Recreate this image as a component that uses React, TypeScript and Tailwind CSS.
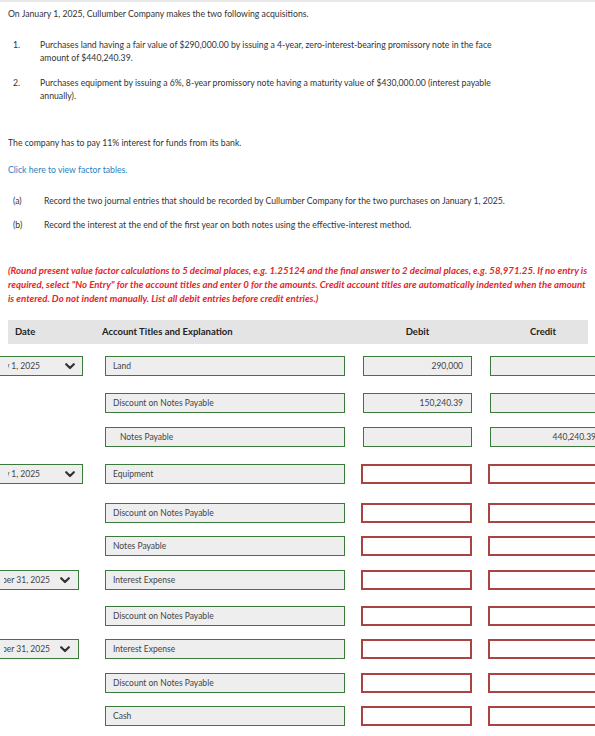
import React from "react";

// Journal entry rows
interface Row {
    account: string;
    indent?: boolean;
    debit?: string;
    credit?: string;
    mt: string;
}
interface Entry {
    date: string;
    dec: boolean;
    filled: boolean;
    rows: Row[];
}

const entries: Entry[] = [
    {
        date: "January 1, 2025",
        dec: false,
        filled: true,
        rows: [
            { account: "Land", debit: "290,000", mt: "mt-[13px]" },
            { account: "Discount on Notes Payable", debit: "150,240.39", mt: "mt-[17px]" },
            { account: "Notes Payable", indent: true, credit: "440,240.39", mt: "mt-[14px]" },
        ],
    },
    {
        date: "January 1, 2025",
        dec: false,
        filled: false,
        rows: [
            { account: "Equipment", mt: "mt-[17px]" },
            { account: "Discount on Notes Payable", mt: "mt-[19px]" },
            { account: "Notes Payable", mt: "mt-[13px]" },
        ],
    },
    {
        date: "December 31, 2025",
        dec: true,
        filled: false,
        rows: [
            { account: "Interest Expense", mt: "mt-[14px]" },
            { account: "Discount on Notes Payable", mt: "mt-[16px]" },
        ],
    },
    {
        date: "December 31, 2025",
        dec: true,
        filled: false,
        rows: [
            { account: "Interest Expense", mt: "mt-[13px]" },
            { account: "Discount on Notes Payable", mt: "mt-[14px]" },
            { account: "Cash", mt: "mt-[13px]" },
        ],
    },
];

const Chevron: React.FC = () => (
    <svg width="10" height="7" viewBox="0 0 10 7" className="shrink-0">
        <polyline points="1.2,1.2 5,5 8.8,1.2" fill="none" stroke="#333" strokeWidth="2.2" strokeLinecap="round" strokeLinejoin="round" />
    </svg>
);

const DateSelect: React.FC<{ date: string; dec: boolean }> = ({ date, dec }) => (
    <div className={`${dec ? "w-[79px]" : "w-[83px]"} h-[20px] shrink-0 flex items-center border-y border-r border-[#3c7a3c] bg-[#eeeeee] overflow-hidden`}>
        <div className={`${dec ? "ml-[4px] w-[46px]" : "ml-[8px] w-[32px]"} flex justify-end overflow-hidden shrink-0`}>
            <span className="shrink-0 whitespace-nowrap text-[8.5px] text-[#444]">{date}</span>
        </div>
        <div className="flex-1" />
        <Chevron />
        <div className={dec ? "w-[8px]" : "w-[7px]"} />
    </div>
);

const AmountBox: React.FC<{ value?: string; filled: boolean; credit?: boolean }> = ({ value, filled, credit }) => {
    if (!filled) {
        return (
            <div className={`h-[20px] shrink-0 border-2 border-[#a94442] bg-white ml-[16px] ${credit ? "w-[115px]" : "w-[111px]"}`} />
        );
    }
    return (
        <div
            className={`h-[20px] shrink-0 border border-[#3c7a3c] bg-[#eeeeee] flex items-center justify-end pr-[8px] text-[8.5px] text-[#444] whitespace-nowrap ml-[18px] ${credit ? "w-[115px]" : "w-[109px]"}`}
        >
            {value}
        </div>
    );
};

export default function App() {
    return (
        <div className="w-[595px] h-[736px] overflow-hidden bg-white border-t-2 border-[#e8e8e8] font-['Lato','Open_Sans',sans-serif] text-[#333]">
            <div className="pl-[8px] pt-[5px] text-[8.7px] leading-[13px]">
                <p>On January 1, 2025, Cullumber Company makes the two following acquisitions.</p>

                <div className="mt-[18px] pl-[5px] flex">
                    <span className="w-[27px] shrink-0">1.</span>
                    <p className="w-[470px]">
                        Purchases land having a fair value of $290,000.00 by issuing a 4-year, zero-interest-bearing promissory note in the face amount of $440,240.39.
                    </p>
                </div>
                <div className="mt-[12px] pl-[5px] flex">
                    <span className="w-[27px] shrink-0">2.</span>
                    <p className="w-[470px]">
                        Purchases equipment by issuing a 6%, 8-year promissory note having a maturity value of $430,000.00 (interest payable annually).
                    </p>
                </div>

                <p className="mt-[34px]">The company has to pay 11% interest for funds from its bank.</p>
                <p className="mt-[14px] text-[#2a7fc0]">Click here to view factor tables.</p>

                <div className="mt-[18px] pl-[5px] flex">
                    <span className="w-[31px] shrink-0">(a)</span>
                    <p>Record the two journal entries that should be recorded by Cullumber Company for the two purchases on January 1, 2025.</p>
                </div>
                <div className="mt-[11px] pl-[5px] flex">
                    <span className="w-[31px] shrink-0">(b)</span>
                    <p>Record the interest at the end of the first year on both notes using the effective-interest method.</p>
                </div>

                <p className="mt-[32px] pr-[3px] text-[9.65px] leading-[14px] font-bold italic text-[#e3262b]">
                    (Round present value factor calculations to 5 decimal places, e.g. 1.25124 and the final answer to 2 decimal places, e.g. 58,971.25. If no entry is required, select "No Entry" for the account titles and enter 0 for the amounts. Credit account titles are automatically indented when the amount is entered. Do not indent manually. List all debit entries before credit entries.)
                </p>
            </div>

            {/* Table header */}
            <div className="mt-[15px] ml-[8px] w-[580px] h-[24px] bg-[#e4e4e4] flex items-center text-[9.5px] font-bold text-[#222]">
                <span className="ml-[7px] w-[87px] shrink-0">Date</span>
                <span className="w-[253px] shrink-0">Account Titles and Explanation</span>
                <span className="w-[125px] shrink-0 text-center">Debit</span>
                <span className="w-[126px] shrink-0 text-center">Credit</span>
            </div>

            {/* Entries */}
            <div className="-mt-[1px]">
                {entries.map((entry, ei) => (
                    <div key={ei}>
                        {entry.rows.map((row, ri) => (
                            <div key={ri} className={`${row.mt} flex items-center`}>
                                {ri === 0 ? (
                                    <DateSelect date={entry.date} dec={entry.dec} />
                                ) : (
                                    <div className={`${entry.dec ? "w-[79px]" : "w-[83px]"} shrink-0`} />
                                )}
                                <div
                                    className={`${entry.dec ? "ml-[26px]" : "ml-[22px]"} w-[240px] h-[20px] shrink-0 border border-[#3c7a3c] bg-[#eeeeee] flex items-center text-[8.5px] text-[#444] whitespace-nowrap ${row.indent ? "pl-[14px]" : "pl-[7px]"}`}
                                >
                                    {row.account}
                                </div>
                                <AmountBox value={row.debit} filled={entry.filled} />
                                <AmountBox value={row.credit} filled={entry.filled} credit />
                            </div>
                        ))}
                    </div>
                ))}
            </div>
        </div>
    );
}
